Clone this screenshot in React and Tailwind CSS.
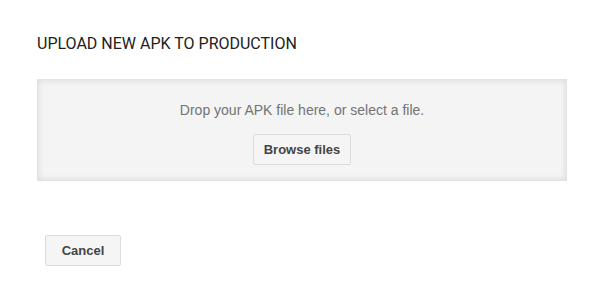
export default function App() {
  return (
    <div className="w-[606px] h-[294px] bg-white relative">
      <div className="pt-[35px] pl-[37px] pr-[39px]">
        <h1 className="text-[16px] leading-[17px] text-[#212121] font-['Roboto',sans-serif] font-normal">
          UPLOAD NEW APK TO PRODUCTION
        </h1>
        <div className="mt-[27px] h-[102px] bg-[#f4f4f4] border border-[#e3e3e3] shadow-[inset_0_0_6px_rgba(0,0,0,0.12)] flex flex-col items-center font-['Liberation_Sans',Arial,sans-serif]">
          <p className="mt-[22px] text-[14px] leading-[16px] text-[#737373]">
            Drop your APK file here, or select a file.
          </p>
          <button className="mt-[16px] w-[98px] h-[31px] bg-[#f5f5f5] border border-[#dcdcdc] rounded-[2px] text-[13px] font-bold text-[#444]">
            Browse files
          </button>
        </div>
        <button className="mt-[54px] ml-[8px] w-[76px] h-[31px] bg-[#f5f5f5] border border-[#dcdcdc] rounded-[2px] text-[13px] font-bold text-[#444] font-['Liberation_Sans',Arial,sans-serif]">
          Cancel
        </button>
      </div>
    </div>
  );
}
